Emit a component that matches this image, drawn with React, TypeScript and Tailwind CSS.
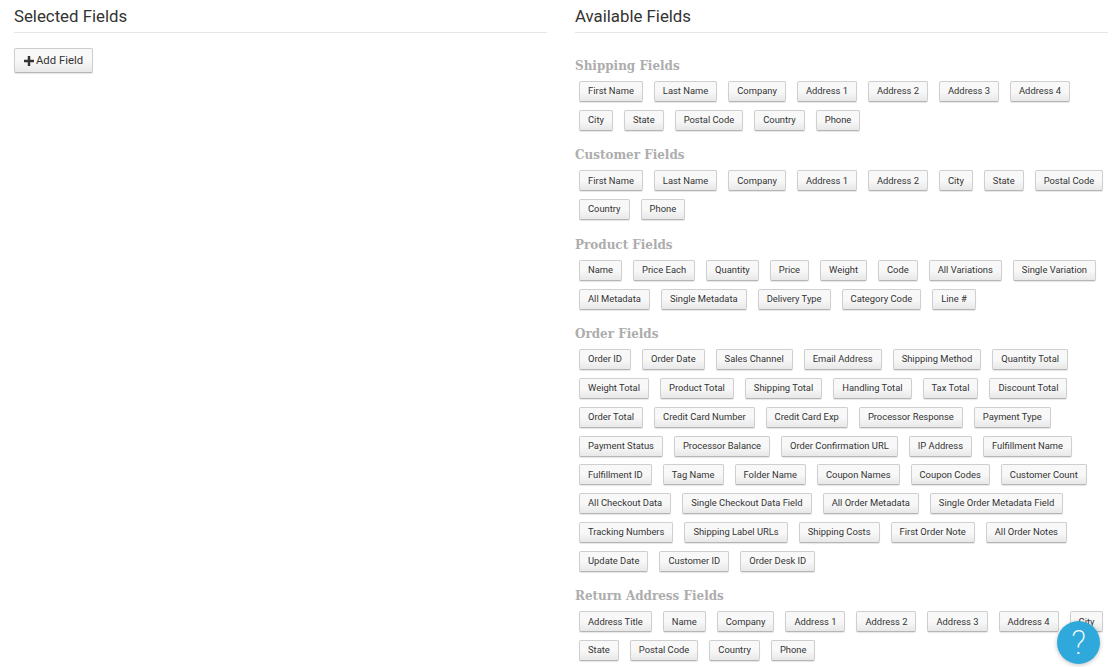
import React from 'react';

const sections = [
  {
    title: 'Shipping Fields',
    fields: ['First Name', 'Last Name', 'Company', 'Address 1', 'Address 2', 'Address 3', 'Address 4', 'City', 'State', 'Postal Code', 'Country', 'Phone'],
  },
  {
    title: 'Customer Fields',
    fields: ['First Name', 'Last Name', 'Company', 'Address 1', 'Address 2', 'City', 'State', 'Postal Code', 'Country', 'Phone'],
  },
  {
    title: 'Product Fields',
    fields: ['Name', 'Price Each', 'Quantity', 'Price', 'Weight', 'Code', 'All Variations', 'Single Variation', 'All Metadata', 'Single Metadata', 'Delivery Type', 'Category Code', 'Line #'],
  },
  {
    title: 'Order Fields',
    fields: [
      'Order ID', 'Order Date', 'Sales Channel', 'Email Address', 'Shipping Method', 'Quantity Total',
      'Weight Total', 'Product Total', 'Shipping Total', 'Handling Total', 'Tax Total', 'Discount Total',
      'Order Total', 'Credit Card Number', 'Credit Card Exp', 'Processor Response', 'Payment Type',
      'Payment Status', 'Processor Balance', 'Order Confirmation URL', 'IP Address', 'Fulfillment Name',
      'Fulfillment ID', 'Tag Name', 'Folder Name', 'Coupon Names', 'Coupon Codes', 'Customer Count',
      'All Checkout Data', 'Single Checkout Data Field', 'All Order Metadata', 'Single Order Metadata Field',
      'Tracking Numbers', 'Shipping Label URLs', 'Shipping Costs', 'First Order Note', 'All Order Notes',
      'Update Date', 'Customer ID', 'Order Desk ID',
    ],
  },
  {
    title: 'Return Address Fields',
    fields: ['Address Title', 'Name', 'Company', 'Address 1', 'Address 2', 'Address 3', 'Address 4', 'City', 'State', 'Postal Code', 'Country', 'Phone'],
  },
];

function FieldButton({ label }: { label: string }) {
  return (
    <button className="h-[21px] px-2 pb-px rounded-[2px] border border-[#cfcfcf] border-b-[#b5b5b5] bg-linear-to-b from-[#f8f8f8] from-50% to-[#e8e8e8] text-[9.4px] leading-none text-[#333] whitespace-nowrap shadow-[0_1px_1px_rgba(0,0,0,0.1)]">
      {label}
    </button>
  );
}

export default function App() {
  return (
    <div className="relative h-[667px] w-[1112px] overflow-hidden bg-white font-['Roboto',sans-serif]">
      <div className="flex gap-7 pl-[14px] pr-1">
        {/* Selected column */}
        <div className="w-[533px] shrink-0">
          <h3 className="h-[33px] border-b border-[#e6e6e6] pt-[6px] text-[16.8px] leading-5 text-[#333]">Selected Fields</h3>
          <button className="mt-[15px] flex h-[25px] items-center gap-[2px] rounded-[2px] border border-[#cfcfcf] border-b-[#b5b5b5] bg-linear-to-b from-[#f8f8f8] from-50% to-[#e8e8e8] px-[9px] text-[11.3px] text-[#333] shadow-[0_1px_1px_rgba(0,0,0,0.1)]">
            <svg width="10" height="10" viewBox="0 0 9 9" className="fill-[#333]">
              <path d="M3.4 0h2.2v3.4H9v2.2H5.6V9H3.4V5.6H0V3.4h3.4z" />
            </svg>
            <span className="pt-px">Add Field</span>
          </button>
        </div>

        {/* Available column */}
        <div className="w-[533px] shrink-0">
          <h3 className="h-[33px] border-b border-[#e6e6e6] pt-[6px] text-[16.8px] leading-5 text-[#333]">Available Fields</h3>
          <div className="mt-6 flex flex-col gap-[15.6px]">
            {sections.map((section) => (
              <div key={section.title}>
                <h4 className="mb-[6px] font-['DejaVu_Serif',serif] font-stretch-condensed text-[13.3px] font-bold leading-[18px] text-[#adadad]">
                  {section.title}
                </h4>
                <div className="flex flex-wrap gap-x-[11px] gap-y-[7.8px] pl-1">
                  {section.fields.map((field) => (
                    <FieldButton key={field} label={field} />
                  ))}
                </div>
              </div>
            ))}
          </div>
        </div>
      </div>

      {/* Help bubble */}
      <div className="absolute left-[1057px] top-[621px] flex h-[43px] w-[43px] items-center justify-center rounded-full bg-[#2fa9dc] text-[33px] font-extralight leading-none text-white shadow-[0_1px_4px_rgba(0,0,0,0.25)]">
        ?
      </div>
    </div>
  );
}
